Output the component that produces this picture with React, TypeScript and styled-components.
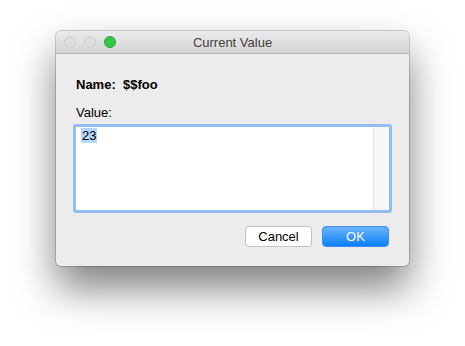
import React from "react";
import styled, { createGlobalStyle } from "styled-components";

const Global = createGlobalStyle`
  html, body { margin: 0; padding: 0; background: #ffffff; }
  body { font-family: "Liberation Sans", Arial, sans-serif; font-size: 13px; color: #000; }
`;

const Stage = styled.div`
  width: 465px;
  height: 346px;
  padding: 31px 0 0 56px;
  box-sizing: border-box;
`;

const Window = styled.div`
  width: 353px;
  height: 235px;
  background: #ececec;
  border-radius: 5px;
  box-shadow: 0 0 0 1px rgba(0, 0, 0, 0.18), 0 22px 40px rgba(0, 0, 0, 0.5);
  display: flex;
  flex-direction: column;
  overflow: hidden;
`;

const TitleBar = styled.div`
  height: 22px;
  flex: none;
  display: flex;
  align-items: center;
  position: relative;
  background: linear-gradient(#ebebeb, #d5d5d5);
  border-bottom: 1px solid #b9b9b9;
  padding-left: 8px;
  gap: 8px;
`;

const Light = styled.span<{ $color: string; $border: string }>`
  width: 12px;
  height: 12px;
  border-radius: 50%;
  background: ${(p) => p.$color};
  box-sizing: border-box;
  border: 1px solid ${(p) => p.$border};
`;

const Title = styled.div`
  position: absolute;
  left: 0;
  right: 0;
  top: 0;
  bottom: 0;
  display: flex;
  align-items: center;
  justify-content: center;
  font-size: 13px;
  color: #404040;
  pointer-events: none;
`;

const Body = styled.div`
  flex: 1;
  display: flex;
  flex-direction: column;
  padding: 23px 20px 18px 20px;
`;

const NameRow = styled.div`
  font-weight: bold;
  font-size: 13px;
  line-height: 16px;
  white-space: pre;
`;

const Label = styled.div`
  margin-top: 12px;
  font-size: 13px;
  line-height: 16px;
`;

const Field = styled.div`
  margin: 3px -3px 0 -3px;
  height: 89px;
  border: 3px solid #93bcf0;
  border-radius: 3px;
  box-sizing: border-box;
  background: #fff;
  display: flex;
`;

const FieldText = styled.div`
  flex: 1;
  padding: 1px 0 0 5px;
  font-size: 13px;
  line-height: 16px;
`;

const Selected = styled.span`
  background: #b4d5fe;
  padding: 0 1px;
`;

const Scroll = styled.div`
  width: 15px;
  background: #f7f7f7;
  border-left: 1px solid #e2e2e2;
`;

const Buttons = styled.div`
  margin-top: 13px;
  display: flex;
  justify-content: flex-end;
  gap: 10px;
`;

const Button = styled.div<{ $primary?: boolean }>`
  width: 67px;
  height: 21px;
  box-sizing: border-box;
  border-radius: 4px;
  display: flex;
  align-items: center;
  justify-content: center;
  font-size: 13px;
  ${(p) =>
    p.$primary
      ? `background: linear-gradient(#6cb3fa, #0c7ffb); color: #fff; border: 1px solid #3b8ef5;`
      : `background: #fff; color: #000; border: 1px solid #c3c3c3;`}
`;

export default function App() {
  return (
    <>
      <Global />
      <Stage>
        <Window>
          <TitleBar>
            <Light $color="#dcdcdc" $border="#cfcfcf" />
            <Light $color="#dcdcdc" $border="#cfcfcf" />
            <Light $color="#33c748" $border="#2aa83c" />
            <Title>Current Value</Title>
          </TitleBar>
          <Body>
            <NameRow>{"Name:  $$foo"}</NameRow>
            <Label>Value:</Label>
            <Field>
              <FieldText>
                <Selected>23</Selected>
              </FieldText>
              <Scroll />
            </Field>
            <Buttons>
              <Button>Cancel</Button>
              <Button $primary>OK</Button>
            </Buttons>
          </Body>
        </Window>
      </Stage>
    </>
  );
}
